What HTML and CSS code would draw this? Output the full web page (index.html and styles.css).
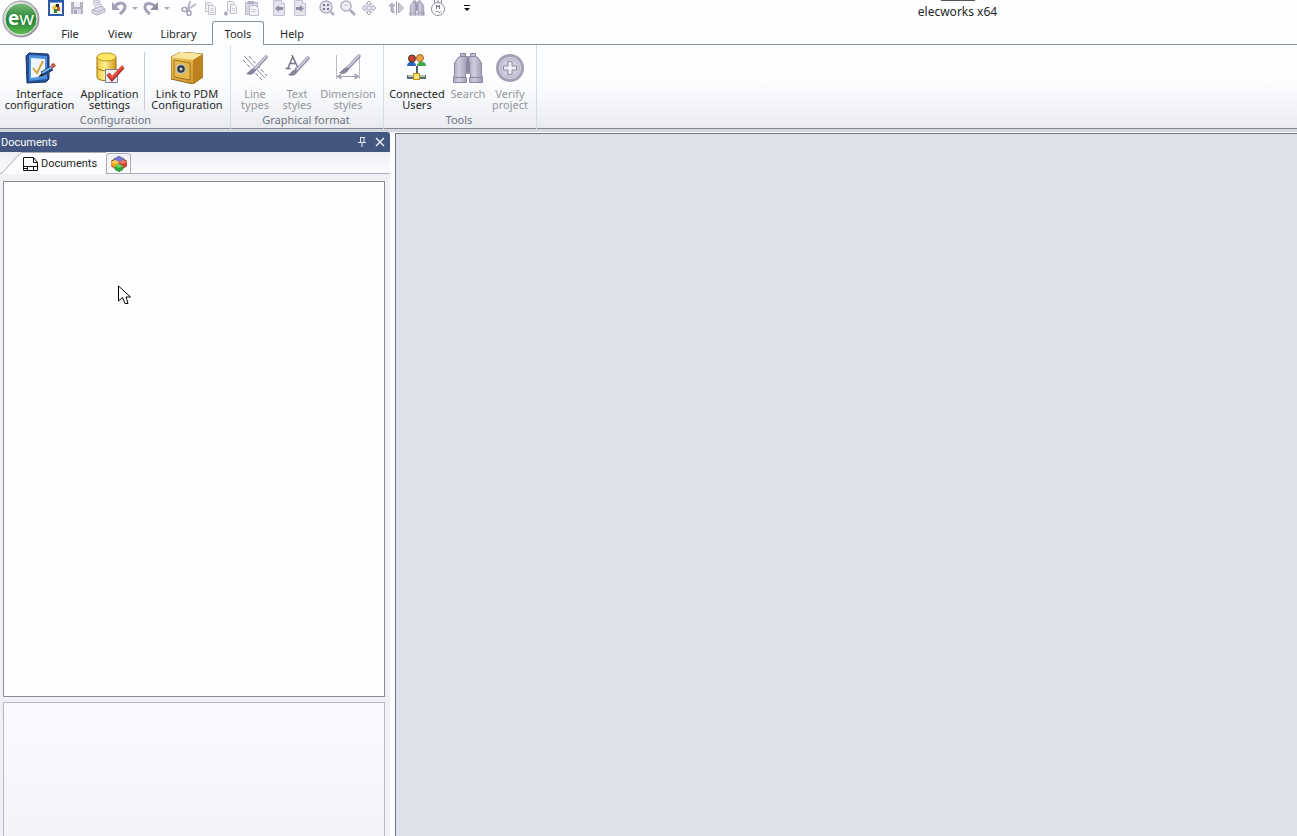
FILE: index.html
```html
<!DOCTYPE html>
<html lang="en">
<head>
<meta charset="utf-8">
<title>elecworks x64</title>
<link rel="stylesheet" href="styles.css">
</head>
<body>
<svg class="defs" width="0" height="0" aria-hidden="true">
  <defs>
    <linearGradient id="green" x1="0" y1="0" x2="0" y2="1"><stop offset="0" stop-color="#7dbb7a"/><stop offset=".45" stop-color="#2f8a3c"/><stop offset=".6" stop-color="#2b8438"/><stop offset="1" stop-color="#62c454"/></linearGradient>
    <linearGradient id="ring" x1="0" y1="0" x2="1" y2="1"><stop offset="0" stop-color="#f4f4f6"/><stop offset="1" stop-color="#85868c"/></linearGradient>
    <linearGradient id="gold" x1="0" y1="0" x2="1" y2="0"><stop offset="0" stop-color="#f2c52c"/><stop offset=".4" stop-color="#fff09a"/><stop offset="1" stop-color="#d59a14"/></linearGradient>
    <linearGradient id="safe" x1="0" y1="0" x2="1" y2="1"><stop offset="0" stop-color="#f3cf6a"/><stop offset="1" stop-color="#c98a1c"/></linearGradient>
    <linearGradient id="steel" x1="0" y1="0" x2="1" y2="0"><stop offset="0" stop-color="#a9a7bd"/><stop offset=".4" stop-color="#cfcddd"/><stop offset="1" stop-color="#9c9ab1"/></linearGradient>
    <g id="page"><path d="M2.500.500h8l3 3v12h-11z" fill="#e4e3ee" stroke="#c2c0d2"/><path d="M10.500.500v3h3" fill="#fff" stroke="#c2c0d2"/></g>
    <g id="brush"><path d="M24 5 12 18" stroke="#8f8da3" stroke-width="3.500" stroke-linecap="round"/><path d="M24 4.500 13 16.500" stroke="#d5d3e2" stroke-width="1.500" stroke-linecap="round"/><path d="M12 16.500c-4 0-4 3-8 5 3 2.500 9 1 9.500-3.500z" fill="#88869d"/></g>
    <g id="binoculars" stroke="#8a88a0"><path d="M8.500 1.500h5v3h2v17h-2v4h1v5h-13v-5l1-3V11l4-6h2z" fill="url(#steel)"/><path d="M23.500 1.500h-5v3h-2v17h2v4h-1v5h13v-5l-1-3V11l-4-6h-2z" fill="url(#steel)"/><path d="M14.500 9v11M17.500 9v11M2 25.500h12M18 25.500h12M8 4.500h6M18 4.500h6" fill="none"/></g>
  </defs>
</svg>

<header class="header">
  <button class="logo" aria-label="Application menu">
    <svg width="38" height="38" viewBox="0 0 38 38">
      <circle cx="19" cy="19" r="18" fill="url(#ring)" stroke="#97989e"/>
      <circle cx="19" cy="19" r="16" fill="url(#green)" stroke="#e8efe8"/>
    </svg>
    <span class="logo-text"><b>e</b>w</span>
  </button>
  <div class="header-rows">
    <div class="titlebar">
      <div class="quick">
        <button aria-label="Project manager"><svg viewBox="0 0 16 16"><path d="M1 1h14v14H1z" fill="#f8f6ea" stroke="#2c5aa8" stroke-width="2"/><path d="M2 2h12v1H2z" fill="#7ba4df"/><path d="m4 8 4-4 2 2-4 4z" fill="#e5b622"/><path d="M8 4h3v3H8z" fill="#222c3c"/><path d="M6 9h3v4H6z" fill="#29863c"/><path d="M9 7h3v4H9z" fill="#cc5a2c"/></svg></button>
        <button disabled aria-label="Save"><svg viewBox="0 0 16 16"><path d="M2 2h12v12H2z" fill="#b3b1c2"/><path d="M5 2h6v5H5z" fill="#eeedf4"/><path d="M4 9h8v5H4z" fill="#d9d8e4"/><path d="M5 10h3v4H5z" fill="#aaa8bc"/></svg></button>
        <button disabled aria-label="Print"><svg viewBox="0 0 16 16"><path d="m3 1 6-1 3 7-6 2z" fill="#f3f2f8" stroke="#c0bed0"/><path d="m2 10 9-4 4 3v3l-8 3-5-2z" fill="#dddbe7" stroke="#b1afc0"/><path d="m3 10 5 2 6-3M5 3l4-1M6 5l4-1" stroke="#b1afc0" fill="none"/></svg></button>
        <button disabled aria-label="Undo"><svg viewBox="0 0 16 16"><path d="M4 6c5-5 10-3 10 1 0 3-3 5-5 7" fill="none" stroke="#a3a1b7" stroke-width="3"/><path d="M1 2v8h8z" fill="#a3a1b7"/></svg></button>
        <button disabled class="drop" aria-label="Undo list"><svg viewBox="0 0 8 8"><path d="M1 3h6L4 6z" fill="#aaa9b5"/></svg></button>
        <button disabled aria-label="Redo"><svg viewBox="0 0 16 16"><path d="M12 6C7 2 2 3 2 7c0 3 2 5 5 7" fill="none" stroke="#a3a1b7" stroke-width="3"/><path d="M15 2v8H7z" fill="#8f8da6"/></svg></button>
        <button disabled class="drop" aria-label="Redo list"><svg viewBox="0 0 8 8"><path d="M1 3h6L4 6z" fill="#aaa9b5"/></svg></button>
        <i class="gap"></i>
        <button disabled aria-label="Cut"><svg viewBox="0 0 16 16"><path d="M9 1 7 9M15 4 6 10" stroke="#bbb9ca" stroke-width="2"/><ellipse cx="3.500" cy="9.500" rx="2.500" ry="2" fill="none" stroke="#a3a1b6" stroke-width="1.500"/><ellipse cx="8" cy="13" rx="2" ry="2.500" fill="none" stroke="#a3a1b6" stroke-width="1.500"/></svg></button>
        <button disabled aria-label="Copy"><svg viewBox="0 0 16 16"><path d="M3.500 2.500h5l2 2v7h-7z" fill="#f4f3f8" stroke="#c3c1d1"/><path d="M6.500 5.500h5l2 2v7h-7z" fill="#f4f3f8" stroke="#c3c1d1"/><path d="M8 8.500h3M8 10.500h4M8 12.500h4M5 4.500h2" stroke="#cdccd9"/></svg></button>
        <button disabled aria-label="Copy with base point"><svg viewBox="0 0 16 16"><path d="M4.500 1.500h5l2 2v7h-7z" fill="#f4f3f8" stroke="#c3c1d1"/><path d="M7.500 4.500h4l2 2v7h-6z" fill="#f4f3f8" stroke="#c3c1d1"/><path d="M9 8.500h3M9 10.500h3" stroke="#cdccd9"/><circle cx="3" cy="13.500" r="1.500" fill="#c5c3d3" stroke="#8f8da3"/></svg></button>
        <button disabled aria-label="Paste"><svg viewBox="0 0 16 16"><path d="M1.500 2.500h12v12h-12z" fill="#d8d6e3" stroke="#b9b7c8"/><path d="M4 1h6v3H4z" fill="#b3b1c3"/><path d="M5.500 5.500h6l3 3v7h-9z" fill="#f3f2f8" stroke="#c0bed0"/><path d="M7 9.500h5M7 11.500h5" stroke="#cfcdda"/></svg></button>
        <i class="gap"></i>
        <button disabled aria-label="Previous page"><svg viewBox="0 0 16 16"><use href="#page"/><path d="M8 5v2h4v3H8v2L4 8.500z" fill="#8f8da5"/></svg></button>
        <button disabled aria-label="Next page"><svg viewBox="0 0 16 16"><use href="#page"/><path d="M8 5v2H4v3h4v2l4-3.500z" fill="#8f8da5"/></svg></button>
        <i class="gap"></i>
        <button disabled aria-label="Zoom to fit"><svg viewBox="0 0 16 16"><path d="m11 11 4 4" stroke="#b7b5c7" stroke-width="3"/><circle cx="7" cy="7" r="6" fill="#e7e6ef" stroke="#b3b1c3" stroke-width="1.500"/><path d="M4 4h2v2H4zM8 4h2v2H8zM4 8h2v2H4zM8 8h2v2H8z" fill="#77758f"/></svg></button>
        <button disabled aria-label="Zoom"><svg viewBox="0 0 16 16"><path d="m10 10 5 5" stroke="#a9a7bb" stroke-width="2.500"/><circle cx="6" cy="6" r="5" fill="#efeef5" stroke="#b3b1c3" stroke-width="1.500"/><path d="M4 5h4" stroke="#c5c3d2"/></svg></button>
        <button disabled aria-label="Pan"><svg viewBox="0 0 16 16"><path d="m8 1 3 3H9v3h3V5l3 3-3 3V9H9v3h2l-3 3-3-3h2V9H4v2L1 8l3-3v2h3V4H5z" fill="#f0eff5" stroke="#a9a7ba"/></svg></button>
        <i class="gap"></i>
        <button disabled aria-label="Symmetry"><svg viewBox="0 0 16 16"><path d="M4 3 1 6h2v4q0 3 3 3v-2q-1 0-1-2V6h2z" fill="#b7b5c7" stroke="#a9a7ba"/><path d="M8.500 1v14" stroke="#9c9aaf"/><path d="m10.500 3 5 5-5 5z" fill="#cfcddc" stroke="#a19fb3"/></svg></button>
        <button disabled aria-label="Find"><svg viewBox="0 0 32 32"><use href="#binoculars"/></svg></button>
        <button disabled aria-label="Motor"><svg viewBox="0 0 16 16"><circle cx="8" cy="9" r="6.500" fill="#fff" stroke="#8e8ca0"/><path d="M4.500 0v4M8 0v3M11.500 0v4" stroke="#8e8ca0"/><path d="M6.500 9V5L8 7l1.500-2v4" fill="none" stroke="#77758b"/><path d="M5.500 12q1.500-2 3 0t3-1" fill="none" stroke="#8e8ca0"/></svg></button>
        <button class="more" aria-label="Customize toolbar"><svg viewBox="0 0 8 8"><path d="M1 1h6v1H1zM1 4h6L4 7z" fill="#111"/></svg></button>
      </div>
      <h1 class="title">elecworks x64</h1>
    </div>
    <nav class="tabs">
      <button>File</button>
      <button>View</button>
      <button class="wide">Library</button>
      <button class="active">Tools</button>
      <button>Help</button>
    </nav>
  </div>
</header>

<section class="ribbon">
  <div class="group">
    <div class="tools">
      <button class="w75"><svg viewBox="0 0 32 32"><path d="m2 4 3-3 19 1 1 2v23l-3 3L3 31z" fill="#244f96" stroke="#1d3765"/><path d="m5 3 18 1v23L5 29z" fill="#4e91dd"/><path d="m7 6 14 1v17L7 26z" fill="#eef5fc"/><path d="m9 16 4 5 6-12" fill="none" stroke="#d6a536" stroke-width="2"/><path d="m18 22 10-6" stroke="#1c467f" stroke-width="5"/><path d="m18 21 10-6" stroke="#81b9ed" stroke-width="2"/><path d="m27 12 3-1 2 3-4 3z" fill="#c4533c"/><path d="m14 25 4-4 2 3z" fill="#222"/></svg><span>Interface<br>configuration</span></button>
      <button class="w65"><svg viewBox="0 0 32 32"><path d="M3 5v20c0 5 19 5 19 0V5z" fill="url(#gold)" stroke="#9c7618"/><ellipse cx="12.500" cy="5" rx="9.500" ry="4" fill="#ffe964" stroke="#b89122"/><path d="M3 15c0 5 19 5 19 0" fill="none" stroke="#a27a17"/><path d="M11.500 17.500h12v13h-12z" fill="#eef1f6" stroke="#7c8493"/><path d="m14 22 4 5L29 15" fill="none" stroke="#9d2a20" stroke-width="4"/><path d="m14 22 4 4L29 14" fill="none" stroke="#e8513f" stroke-width="2.500"/></svg><span>Application<br>settings</span></button>
      <i class="sep"></i>
      <button class="w84"><svg viewBox="0 0 32 32"><path d="m0 5 10-5 22 2v23l-10 7-22-5z" fill="url(#safe)" stroke="#8d661d"/><path d="m0 5 22 3L32 2 10 0z" fill="#fbe6a1"/><path d="m22 8 10-6v23l-10 7z" fill="#bd811e"/><path d="m3 8 16 3v17L3 25z" fill="#e7b94c" stroke="#a0731c"/><circle cx="10" cy="17" r="4.500" fill="#303740" stroke="#c5c3b6" stroke-width="1.500"/><circle cx="10" cy="17" r="1.500" fill="#d3d8df"/></svg><span>Link to PDM<br>Configuration</span></button>
    </div>
    <h2>Configuration</h2>
  </div>
  <div class="group">
    <div class="tools">
      <button class="w42" disabled><svg viewBox="0 0 32 32"><path d="m4 8 19 20M10 4l18 20" stroke="#77758c" stroke-dasharray="4 2" fill="none"/><path d="m5 4 21 22" stroke="#8f8da3"/><use href="#brush" x="3"/></svg><span>Line<br>types</span></button>
      <button class="w42" disabled><svg viewBox="0 0 32 32"><path d="m7 16 5-12M11 3l6 13M8.500 11.500H15M4.500 16.500h5M14 16.500h5" fill="none" stroke="#77758b" stroke-width="1.500"/><use href="#brush" x="3" y="1"/></svg><span>Text<br>styles</span></button>
      <button class="w60" disabled><svg viewBox="0 0 32 32"><path d="M4.500 3v24M27.500 3v24" stroke="#bcbac9"/><path d="M5 24.500h22M9 22l-4 2.500L9 27zM23 22l4 2.500-4 2.500z" fill="#a5a3b6" stroke="#a5a3b6"/><use href="#brush" x="3" y="-1"/></svg><span>Dimension<br>styles</span></button>
    </div>
    <h2>Graphical format</h2>
  </div>
  <div class="group">
    <div class="tools">
      <button class="w60"><svg viewBox="0 0 32 32"><path d="M6 14c0-6 9-6 9 0z" fill="#2d63bd"/><path d="M16 14c0-6 9-6 9 0z" fill="#43a548"/><circle cx="11" cy="6.500" r="3.500" fill="#c2452c" stroke="#482d22"/><circle cx="19" cy="6" r="3.500" fill="#eca344" stroke="#9e6923"/><path d="M16 14v8" stroke="#555e66" stroke-width="2"/><path d="M6 25h19" stroke="#596c69" stroke-width="4"/><path d="M7 24h17" stroke="#cfe1d8" stroke-width="1.500"/><path d="M12.500 21.500h6v6h-6z" fill="#ffe273" stroke="#b98c20"/></svg><span>Connected<br>Users</span></button>
      <button class="w42" disabled><svg viewBox="0 0 32 32"><use href="#binoculars"/></svg><span>Search</span></button>
      <button class="w42" disabled><svg viewBox="0 0 32 32"><circle cx="16" cy="16" r="12.500" fill="#dad8e5" stroke="#a3a1b6" stroke-width="3"/><circle cx="16" cy="16" r="9.500" fill="#cfcddc" stroke="#b1afc2"/><path d="M14 9.500h4V14h4.500v4H18v4.500h-4V18H9.500v-4H14z" fill="#f0eff6" stroke="#8b899f"/></svg><span>Verify<br>project</span></button>
    </div>
    <h2>Tools</h2>
  </div>
</section>

<main class="workspace">
  <aside class="panel">
    <div class="panel-title">
      <h2>Documents</h2>
      <button aria-label="Pin"><svg viewBox="0 0 12 12"><path d="M4 1.500h5M4.500 1.500v5M8 1v6M2 6.500h8M6 7v4" fill="none" stroke="#e5eaf4"/></svg></button>
      <button aria-label="Close"><svg viewBox="0 0 12 12"><path d="m2 2 8 8M10 2l-8 8" stroke="#e5eaf4" stroke-width="1.500"/></svg></button>
    </div>
    <div class="panel-tabs">
      <button class="doc-tab">
        <svg class="slant" viewBox="0 0 22 22"><path d="M0 22 4 19 18 5q4-4 4-4v21z" fill="#fcfcfe"/><path d="M0 21.500q2 0 4-2.500L17 4.500q3-4 5-4" fill="none" stroke="#aaadb8"/></svg>
        <span class="doc-label"><svg viewBox="0 0 17 16"><path d="M1.500 14.500v-13h10l4 5v8z" fill="#fff" stroke="#111"/><path d="M11.500 1.500v5h4M1.500 10.500h14M5.500 10.500v4M11.500 10.500v4M1.500 12.500h4" fill="none" stroke="#111"/></svg>Documents</span>
      </button>
      <button class="cube-tab" aria-label="Components"><svg viewBox="0 0 16 16"><path d="m8 0 4 2 4 3v5l-8 6-8-6V5l4-3z" fill="#8a4a35"/><path d="m8 0 4 2v3L8 7 4 5V2z" fill="#6e74d8"/><path d="m4 4 4 2v4l-4 2-4-3V6z" fill="#eba323"/><path d="m12 4 4 2v4l-4 2-4-2V6z" fill="#d33f35"/><path d="m8 8 4 2v4l-4 2-4-2v-4z" fill="#2fa63a"/><path d="m8 8 4 2-4 2-4-2z" fill="#6ed366"/><path d="m4 4 4 2-4 2-4-2z" fill="#f8cd61"/><path d="m12 4 4 2-4 2-4-2z" fill="#ef7c68"/></svg></button>
    </div>
    <div class="panel-body">
      <div class="tree"></div>
      <div class="details"></div>
    </div>
  </aside>
  <div class="canvas"></div>
</main>
<svg class="cursor" viewBox="0 0 13 20" aria-hidden="true"><path d="M.500 1v15l4-3.500L7 18.500h3L8 12h4.500z" fill="#fff" stroke="#000"/></svg>
</body>
</html>
```
FILE: styles.css
```css
* { box-sizing: border-box; }
body {
  margin: 0;
  height: 100vh;
  display: flex;
  flex-direction: column;
  overflow: hidden;
  background: #fdfeff;
  color: #262626;
  font: 11px/12px "Noto Sans", "Open Sans", sans-serif;
}
button {
  margin: 0;
  padding: 0;
  border: 0;
  background: none;
  color: inherit;
  font: inherit;
}
h1, h2 { margin: 0; font: inherit; }
svg { display: block; }
.defs { position: absolute; }

.header {
  display: flex;
  height: 45px;
  border-bottom: 1px solid #8b8d98;
}
.logo {
  position: relative;
  width: 45px;
  padding-left: 2px;
  align-self: flex-start;
}
.logo-text {
  position: absolute;
  inset: 0 5px 0 2px;
  color: #fff;
  font: 19px/36px "Open Sans", sans-serif;
  text-align: center;
}
.header-rows { flex: 1; display: flex; flex-direction: column; }
.titlebar { display: flex; height: 21px; }
.quick { display: flex; height: 16px; align-items: center; }
.quick button { width: 21px; display: grid; place-items: center; }
.quick svg { width: 16px; height: 16px; }
.quick .drop { width: 11px; }
.quick .drop svg, .quick .more svg { width: 8px; height: 8px; }
.quick .more { width: 14px; margin-left: 12px; }
.quick .gap { width: 6px; }
.title {
  flex: 1;
  margin-left: 144px;
  text-align: center;
  font-size: 12px;
  line-height: 24px;
  background: linear-gradient(#555, #555) center top / 34px 1px no-repeat;
}
.tabs { display: flex; height: 24px; margin-bottom: -1px; }
.tabs button { width: 50px; padding-top: 1px; }
.tabs .wide { width: 67px; }
.tabs .active {
  width: 52px;
  border: 1px solid #8b8d98;
  border-bottom: 0;
  border-radius: 3px 3px 0 0;
  background: #fdfeff;
}
.tabs button:last-child { width: 56px; }

.ribbon {
  display: flex;
  height: 87px;
  border-bottom: 3px solid #d4d7dd;
  background: linear-gradient(#fdfeff 40%, #f3f4f8 75%, #e9ebf0);
  box-shadow: inset 0 -1px #85888f;
}
.group {
  display: flex;
  flex-direction: column;
  padding: 7px 1px 0 2px;
  border-right: 1px solid #d9dbe2;
}
.group + .group { padding: 7px 5px 0 3px; }
.tools { display: flex; height: 62px; }
.tools button {
  display: flex;
  flex-direction: column;
  align-items: center;
  gap: 4px;
  line-height: 11px;
  white-space: nowrap;
}
.tools svg { width: 32px; height: 32px; }
.tools button:disabled { color: #96979d; }
.w42 { width: 42px; }
.w60 { width: 60px; }
.w65 { width: 65px; }
.w75 { width: 75px; }
.w84 { width: 84px; }
.sep { width: 1px; height: 58px; margin: 0 0 0 2px; background: #c9ccd4; }
.group h2 { text-align: center; color: #6f7380; }

.workspace { flex: 1; display: flex; min-height: 0; }
.panel {
  width: 390px;
  display: flex;
  flex-direction: column;
  background: #f0f0f6;
  font-family: Roboto, sans-serif;
}
.panel-title {
  display: flex;
  align-items: center;
  gap: 6px;
  height: 20px;
  padding: 0 4px 0 1px;
  border-radius: 0 3px 0 0;
  background: #425680;
  color: #fff;
}
.panel-title h2 { flex: 1; padding-top: 2px; }
.panel-title svg { width: 12px; height: 12px; }
.panel-tabs {
  display: flex;
  align-items: stretch;
  height: 22px;
  background: linear-gradient(#eeeef5, #fcfcfe);
  box-shadow: inset 0 -1px #aaadb8;
}
.doc-tab { display: flex; }
.slant { width: 22px; height: 22px; }
.doc-label {
  display: flex;
  align-items: center;
  gap: 2px;
  width: 84px;
  padding-top: 1px;
  border-top: 1px solid #aaadb8;
  background: #fcfcfe;
}
.doc-label svg { width: 17px; height: 16px; }
.cube-tab {
  width: 25px;
  margin-top: 1px;
  display: grid;
  place-items: center;
  border: 1px solid #aaadb8;
  border-radius: 3px 3px 0 0;
}
.cube-tab svg { width: 16px; height: 16px; }
.panel-body {
  flex: 1;
  display: flex;
  flex-direction: column;
  gap: 5px;
  padding: 7px 5px 0 3px;
}
.tree { flex: 1; border: 1px solid #8b8d98; background: #fdfeff; }
.details {
  flex: 0 0 134px;
  border: 1px solid #b4b7c4;
  border-bottom: 0;
  background: linear-gradient(#fafbfd, #f3f4f9);
}
.canvas {
  flex: 1;
  margin: 1px 0 0 5px;
  border: solid #6f737b;
  border-width: 1px 0 0 1px;
  background: #dde1ea;
}
.cursor {
  position: absolute;
  left: 118px;
  top: 285px;
  width: 13px;
  height: 20px;
}
```
